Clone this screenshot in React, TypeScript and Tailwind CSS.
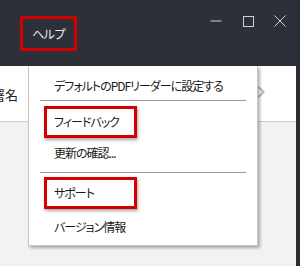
import React from 'react'

const FONT = "font-['Yu_Gothic_UI','Noto_Sans_CJK_JP',sans-serif] [font-feature-settings:'palt']"

function MenuItem({ label, boxed }: { label: string; boxed?: boolean }) {
  if (boxed) {
    return (
      <div className="ml-[15px] w-[93px] h-[33px] border-[3px] border-[#d40000] shadow-[1px_2px_3px_rgba(0,0,0,0.35)] flex items-center pl-[7px]">
        <span>{label}</span>
      </div>
    )
  }
  return <span className="pl-[25px]">{label}</span>
}

export default function App() {
  return (
    <div className={`relative w-[300px] h-[266px] overflow-hidden flex bg-[#f2f2f2] ${FONT}`}>
      <div className="flex-1 flex flex-col">
        {/* title bar */}
        <div className="h-[66px] bg-[#2e3039] flex items-start">
          <div className="ml-[20px] mt-[16px] w-[57px] h-[35px] border-[3px] border-[#d40000] flex items-center justify-center text-[12px] tracking-[-0.5px] text-[#e8e8e8]">
            ヘルプ
          </div>
          <div className="ml-auto flex">
            <div className="w-[32px] h-[42px] flex items-center justify-center">
              <svg width="12" height="2" viewBox="0 0 12 2">
                <line x1="0.5" y1="1" x2="11.5" y2="1" stroke="#cfcfcf" strokeWidth="1" />
              </svg>
            </div>
            <div className="w-[32px] h-[42px] flex items-center justify-center">
              <svg width="11" height="11" viewBox="0 0 11 11">
                <rect x="0.5" y="0.5" width="10" height="10" fill="none" stroke="#cfcfcf" strokeWidth="1" />
              </svg>
            </div>
            <div className="w-[32px] h-[42px] flex items-center justify-center">
              <svg width="12" height="12" viewBox="0 0 12 12">
                <path d="M0.5 0.5 L11.5 11.5 M11.5 0.5 L0.5 11.5" stroke="#cfcfcf" strokeWidth="1" />
              </svg>
            </div>
          </div>
        </div>

        {/* toolbar row */}
        <div className="h-[56px] bg-white border-b border-[#cfcfcf] flex items-center justify-between">
          <span className="-ml-[8px] mt-[2px] text-[13px] text-[#222]">署名</span>
          <svg width="8" height="12" viewBox="0 0 8 12" className="mr-[31px] -mt-[4px]">
            <path d="M1.5 1 L6.5 6 L1.5 11" fill="none" stroke="#b8b8b8" strokeWidth="2" />
          </svg>
        </div>

        <div className="flex-1" />
      </div>
      <div className="w-[4px] bg-[#2b2d34]" />

      {/* help menu */}
      <div className="absolute left-[28px] top-[66px] w-[230px] h-[180px] bg-white border border-[#c4c4c4] border-t-0 shadow-[2px_2px_3px_rgba(0,0,0,0.3)] flex flex-col text-[12px] tracking-[-1px] text-[#1a1a1a]">
        <div className="h-[34px] pt-[6px] flex items-center">
          <MenuItem label="デフォルトのPDFリーダーに設定する" />
        </div>
        <div className="mx-[11px] h-px bg-[#9a9a9a]" />
        <div className="h-[5px]" />
        <MenuItem label="フィードバック" boxed />
        <div className="h-[30px] flex items-center">
          <MenuItem label="更新の確認..." />
        </div>
        <div className="h-[4px]" />
        <div className="mx-[11px] h-px bg-[#9a9a9a]" />
        <div className="h-[4px]" />
        <MenuItem label="サポート" boxed />
        <div className="h-[36px] flex items-center">
          <MenuItem label="バージョン情報" />
        </div>
      </div>
    </div>
  )
}
